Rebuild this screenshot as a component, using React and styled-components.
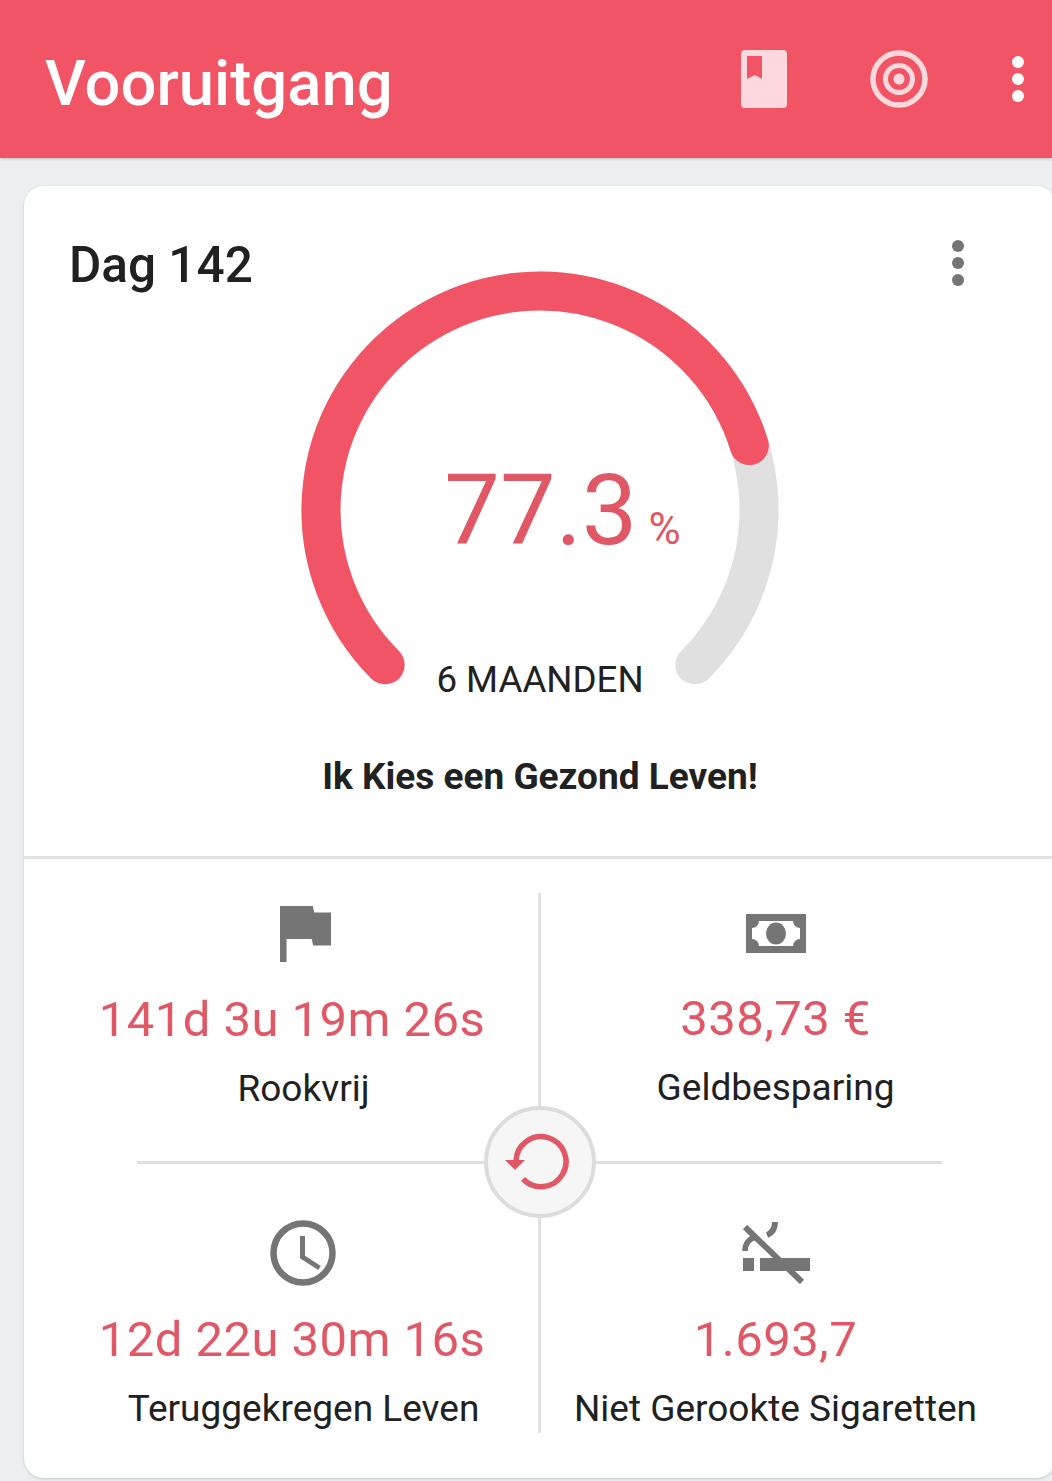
import React from "react";
import styled, { createGlobalStyle } from "styled-components";

const RED = "#f15464";
const TEXT_RED = "#e05765";
const GREY = "#757575";
const PALE = "#fdd9dd";

const Global = createGlobalStyle`
  html, body {
    margin: 0;
    padding: 0;
    width: 1052px;
    height: 1481px;
    overflow: hidden;
    background: #eceef0;
    font-family: Roboto, "Liberation Sans", sans-serif;
  }
`;

const Page = styled.div`
  width: 1052px;
  height: 1481px;
  overflow: hidden;
`;

const Toolbar = styled.header`
  height: 158px;
  background: ${RED};
  box-shadow: 0 1px 3px rgba(0, 0, 0, 0.2);
  display: flex;
  align-items: center;
  padding-left: 45px;
`;

const Title = styled.h1`
  margin: 0;
  flex: 1;
  color: #fff;
  font-size: 63.4px;
  font-weight: 500;
  line-height: 70px;
  padding-top: 8px;
`;

const ToolIcons = styled.div`
  display: flex;
  align-items: center;
  margin-right: 28px;
  height: 100%;
`;

const Card = styled.main`
  width: 1032px;
  height: 1292px;
  margin: 28px 0 0 24px;
  background: #fff;
  border-radius: 20px;
  box-shadow: 0 1px 3px rgba(0, 0, 0, 0.16);
  overflow: hidden;
`;

const Top = styled.section`
  height: 673px;
  box-sizing: border-box;
  border-bottom: 3px solid #e2e2e2;
  display: grid;
  grid-template-rows: auto auto;
  justify-items: center;
  align-content: start;
`;

const Stack = styled.div`
  grid-row: 1;
  grid-column: 1;
  width: 100%;
  display: grid;
  justify-items: center;
`;

const CardHead = styled.div`
  grid-row: 1;
  grid-column: 1;
  width: 100%;
  box-sizing: border-box;
  padding: 48px 92px 0 45px;
  display: flex;
  justify-content: space-between;
  align-items: flex-start;
  z-index: 1;
`;

const Day = styled.h2`
  margin: 0;
  font-size: 49.5px;
  font-weight: 500;
  line-height: 62px;
  color: #212121;
`;

const MenuDots = styled.span`
  margin-top: 6px;
`;

const GaugeWrap = styled.div`
  grid-row: 1;
  grid-column: 1;
  position: relative;
  width: 480px;
  height: 420px;
  margin-top: 84px;
`;

const GaugeValue = styled.div`
  position: absolute;
  left: 0;
  right: 0;
  top: 181px;
  padding-left: 45px;
  display: flex;
  justify-content: center;
  align-items: baseline;
  gap: 11px;
  color: ${TEXT_RED};
  line-height: 118px;
`;

const Percent = styled.span`
  font-size: 99px;
`;

const Unit = styled.span`
  font-size: 44px;
`;

const GaugeLabel = styled.div`
  position: absolute;
  left: 0;
  right: 0;
  top: 387px;
  text-align: center;
  font-size: 36.7px;
  line-height: 46px;
  color: #212121;
`;

const Motto = styled.p`
  margin: 64px 0 0;
  font-size: 37px;
  font-weight: 700;
  line-height: 46px;
  color: #212121;
  text-align: center;
`;

const Stats = styled.section`
  position: relative;
  margin: 34px 46px 0 45px;
  display: grid;
  grid-template-columns: 472px 1fr;
  grid-auto-rows: 270px;
`;

const Stat = styled.div`
  display: flex;
  flex-direction: column;
  align-items: center;
  border-right: ${(p) => (p.$divider ? "3px solid #e0e0e0" : "none")};
`;

const IconSlot = styled.div`
  height: 70px;
  box-sizing: content-box;
  margin-top: ${(p) => p.$top}px;
  margin-left: ${(p) => p.$nudge || 0}px;
  display: flex;
  align-items: center;
  justify-content: center;
`;

const StatValue = styled.div`
  margin-top: ${(p) => p.$gap}px;
  margin-right: ${(p) => p.$shift || 0}px;
  font-size: 49px;
  line-height: 60px;
  color: ${TEXT_RED};
  letter-spacing: 0.45px;
  white-space: nowrap;
`;

const StatLabel = styled.div`
  margin-top: 16px;
  font-size: 37px;
  line-height: 46px;
  color: #212121;
  white-space: nowrap;
`;

const CrossBar = styled.div`
  position: absolute;
  left: 68px;
  width: 805px;
  top: 213px;
  display: flex;
  align-items: center;
`;

const CrossLine = styled.div`
  flex: 1;
  height: 3px;
  background: #e0e0e0;
`;

const ResetButton = styled.button`
  width: 112px;
  height: 112px;
  padding: 2px 6px 0 0;
  box-sizing: border-box;
  border: 4px solid #dcdcdc;
  border-radius: 50%;
  background: #f6f6f6;
  display: flex;
  align-items: center;
  justify-content: center;
`;

const Book = () => (
  <svg width="46" height="58" viewBox="0 0 46 58" style={{ marginRight: 83 }}>
    <path
      fillRule="evenodd"
      fill={PALE}
      d="M4 0h38a4 4 0 0 1 4 4v50a4 4 0 0 1-4 4H4a4 4 0 0 1-4-4V4a4 4 0 0 1 4-4zM6 6v23l8-4 7 4V6z"
    />
  </svg>
);

const Target = () => (
  <svg width="58" height="58" viewBox="0 0 58 58" style={{ marginRight: 84 }}>
    <circle cx="29" cy="29" r="26" fill="none" stroke={PALE} strokeWidth="5.5" />
    <circle cx="29" cy="29" r="13.5" fill="none" stroke={PALE} strokeWidth="5" />
    <circle cx="29" cy="29" r="5.5" fill={PALE} />
  </svg>
);

const Dots = ({ color }) => (
  <svg width="12" height="46" viewBox="0 0 12 46">
    <circle cx="6" cy="6" r="6" fill={color} />
    <circle cx="6" cy="23" r="6" fill={color} />
    <circle cx="6" cy="40" r="6" fill={color} />
  </svg>
);

const Gauge = () => {
  const r = 219;
  const cx = 240;
  const cy = 240;
  const point = (deg) => {
    const a = (deg * Math.PI) / 180;
    return [cx + r * Math.sin(a), cy - r * Math.cos(a)];
  };
  const [sx, sy] = point(-135);
  const [ex, ey] = point(135);
  const [px, py] = point(-135 + 270 * 0.77);
  return (
    <svg width="480" height="420" viewBox="0 0 480 420">
      <path
        d={`M${sx} ${sy}A${r} ${r} 0 1 1 ${ex} ${ey}`}
        fill="none"
        stroke="#e0e0e0"
        strokeWidth="39"
        strokeLinecap="round"
      />
      <path
        d={`M${sx} ${sy}A${r} ${r} 0 1 1 ${px} ${py}`}
        fill="none"
        stroke={RED}
        strokeWidth="39"
        strokeLinecap="round"
      />
    </svg>
  );
};

const FlagIcon = () => (
  <svg width="51" height="56" viewBox="5 4 14 17" preserveAspectRatio="none">
    <path fill={GREY} d="M14.4 6L14 4H5v17h1.8v-7H13.7l.4 2H19V6z" />
  </svg>
);

const MoneyIcon = () => (
  <svg width="60" height="39" viewBox="0 0 60 39">
    <path
      fillRule="evenodd"
      fill={GREY}
      d="M0 0h60v39H0zM13 7a7 7 0 0 1-7 7v11a7 7 0 0 1 7 7h34a7 7 0 0 1 7-7V14a7 7 0 0 1-7-7z"
    />
    <ellipse cx="30" cy="19.5" rx="10" ry="11" fill={GREY} />
  </svg>
);

const ClockIcon = () => (
  <svg width="66" height="66" viewBox="0 0 66 66">
    <circle cx="33" cy="33" r="29.5" fill="none" stroke={GREY} strokeWidth="6.5" />
    <path d="M32.5 16v21l17 11" fill="none" stroke={GREY} strokeWidth="5" />
  </svg>
);

const NoSmokeIcon = () => (
  <svg width="68" height="62" viewBox="0 0 68 62">
    <path fill={GREY} d="M1 36h11v13H1zM18 36h16l13 13H18zM39 36h29v13H52z" />
    <path d="M3 5l57 55" fill="none" stroke={GREY} strokeWidth="6" />
    <path d="M3 29c0-8 5-13 11-14" fill="none" stroke={GREY} strokeWidth="5.5" />
    <path d="M25 13c5-2 8-7 8-13" fill="none" stroke={GREY} strokeWidth="6" />
  </svg>
);

const ResetIcon = () => (
  <svg width="66" height="62" viewBox="0 0 66 62">
    <path
      d="M12 29A25 25 0 1 1 19 47"
      fill="none"
      stroke={TEXT_RED}
      strokeWidth="5.5"
    />
    <path d="M1 28h20l-10 10z" fill={TEXT_RED} />
  </svg>
);

const stats = [
  { icon: <FlagIcon />, value: "141d 3u 19m 26s", label: "Rookvrij", top: 6, gap: 21, shift: 23, nudge: 4 },
  { icon: <MoneyIcon />, value: "338,73 €", label: "Geldbesparing", top: 5, gap: 21 },
  { icon: <ClockIcon />, value: "12d 22u 30m 16s", label: "Teruggekregen Leven", top: 55, gap: 22, shift: 23, nudge: -2 },
  { icon: <NoSmokeIcon />, value: "1.693,7", label: "Niet Gerookte Sigaretten", top: 55, gap: 22 },
];

export default function App() {
  return (
    <Page>
      <Global />
      <Toolbar>
        <Title>Vooruitgang</Title>
        <ToolIcons>
          <Book />
          <Target />
          <Dots color="#fff" />
        </ToolIcons>
      </Toolbar>
      <Card>
        <Top>
          <Stack>
            <CardHead>
              <Day>Dag 142</Day>
              <MenuDots>
                <Dots color={GREY} />
              </MenuDots>
            </CardHead>
            <GaugeWrap>
              <Gauge />
              <GaugeValue>
                <Percent>77.3</Percent>
                <Unit>%</Unit>
              </GaugeValue>
              <GaugeLabel>6 MAANDEN</GaugeLabel>
            </GaugeWrap>
          </Stack>
          <Motto>Ik Kies een Gezond Leven!</Motto>
        </Top>
        <Stats>
          {stats.map((s, i) => (
            <Stat key={s.label} $divider={i % 2 === 0}>
              <IconSlot $top={s.top} $nudge={s.nudge}>{s.icon}</IconSlot>
              <StatValue $gap={s.gap} $shift={s.shift}>{s.value}</StatValue>
              <StatLabel>{s.label}</StatLabel>
            </Stat>
          ))}
          <CrossBar>
            <CrossLine />
            <ResetButton aria-label="reset">
              <ResetIcon />
            </ResetButton>
            <CrossLine />
          </CrossBar>
        </Stats>
      </Card>
    </Page>
  );
}
